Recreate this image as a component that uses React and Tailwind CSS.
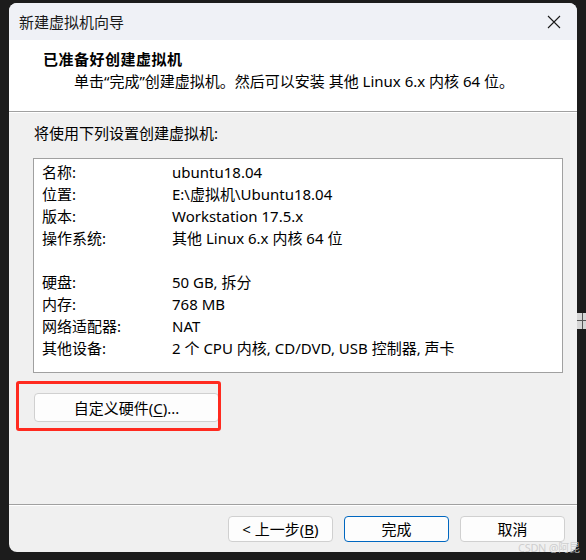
import React from "react";

const rows = [
  ["名称:", "ubuntu18.04"],
  ["位置:", "E:\\虚拟机\\Ubuntu18.04"],
  ["版本:", "Workstation 17.5.x"],
  ["操作系统:", "其他 Linux 6.x 内核 64 位"],
  null,
  ["硬盘:", "50 GB, 拆分"],
  ["内存:", "768 MB"],
  ["网络适配器:", "NAT"],
  ["其他设备:", "2 个 CPU 内核, CD/DVD, USB 控制器, 声卡"],
];

const WinButton = ({ children, primary }) => (
  <button
    className={`w-[105px] h-[26px] rounded-[4px] bg-[#fdfdfd] text-[15px] leading-[22px] text-black ${
      primary ? "border border-[#0067c0]" : "border border-[#d0d0d0]"
    }`}
  >
    {children}
  </button>
);

export default function App() {
  return (
    <div className="relative w-[586px] h-[560px] bg-[#1c1c1c] flex font-['Noto_Sans','Noto_Sans_CJK_SC',sans-serif] text-black overflow-hidden">
      <div className="w-[9px] shrink-0" />

      {/* dialog window */}
      <div className="mt-[3px] w-[568px] h-[549px] shrink-0 rounded-[8px] overflow-hidden bg-[#f0f0f0] flex flex-col">
        {/* title bar */}
        <div className="h-[37px] bg-[#eff1f6] flex items-center justify-between pl-[10px] pr-[16px]">
          <span className="text-[15px] leading-[22px] text-[#1a1a1a]">新建虚拟机向导</span>
          <svg width="14" height="14" viewBox="0 0 14 14" className="mt-[1px]">
            <path d="M1 1 L13 13 M13 1 L1 13" stroke="#1a1a1a" strokeWidth="1.1" fill="none" />
          </svg>
        </div>

        {/* header */}
        <div className="h-[72px] bg-white pt-[8px] pl-[34px] border-b border-[#a0a0a0]">
          <div className="text-[15px] leading-[22px] font-bold tracking-[0.5px]">已准备好创建虚拟机</div>
          <div className="text-[15px] leading-[22px] pl-[31px]">
            单击“完成”创建虚拟机。然后可以安装 其他 Linux 6.x 内核 64 位。
          </div>
        </div>
        <div className="h-px bg-white" />

        {/* body */}
        <div className="flex-1 flex flex-col pt-[9px]">
          <div className="pl-[25px] text-[15px] leading-[22px]">将使用下列设置创建虚拟机:</div>

          <div className="mt-[14px] ml-[24px] w-[530px] h-[215px] bg-white border border-[#a0a0a0] pt-[2px] pl-[8px]">
            {rows.map((r, i) =>
              r ? (
                <div key={i} className="flex text-[15px] leading-[22px]">
                  <span className="w-[130px] shrink-0">{r[0]}</span>
                  <span>{r[1]}</span>
                </div>
              ) : (
                <div key={i} className="h-[22px]" />
              )
            )}
          </div>

          <div className="relative mt-[20px] ml-[25px] w-[185px] h-[29px]">
            <button className="w-full h-full rounded-[4px] bg-[#fdfdfd] border border-[#d0d0d0] text-[15px] leading-[22px]">
              自定义硬件(<span className="underline underline-offset-2">C</span>)...
            </button>
            <div className="absolute left-[-18px] top-[-12px] w-[205px] h-[50px] border-[3px] border-[#ff2a1f] rounded-[3px]" />
          </div>
        </div>

        {/* footer */}
        <div className="h-[48px] border-t border-[#a0a0a0]">
          <div className="h-px bg-white" />
          <div className="flex justify-end gap-[11px] pt-[10px] pr-[12px]">
            <WinButton>
              &lt; 上一步(<span className="underline underline-offset-2">B</span>)
            </WinButton>
            <WinButton primary>完成</WinButton>
            <WinButton>取消</WinButton>
          </div>
        </div>
      </div>

      <div className="w-[9px] shrink-0 flex flex-col">
        <div className="mt-[313px] w-[9px] h-[16px] bg-[#d6d6d6] relative">
          <div className="absolute left-[5px] top-0 w-px h-full bg-[#555]" />
          <div className="absolute left-0 top-[7px] w-full h-px bg-[#555]" />
        </div>
      </div>

      <span className="absolute left-[518px] top-[541px] whitespace-nowrap text-[11px] leading-[14px] tracking-[-0.3px] text-[#c8c8c8]/85">
        CSDN @阿昆
      </span>
    </div>
  );
}
